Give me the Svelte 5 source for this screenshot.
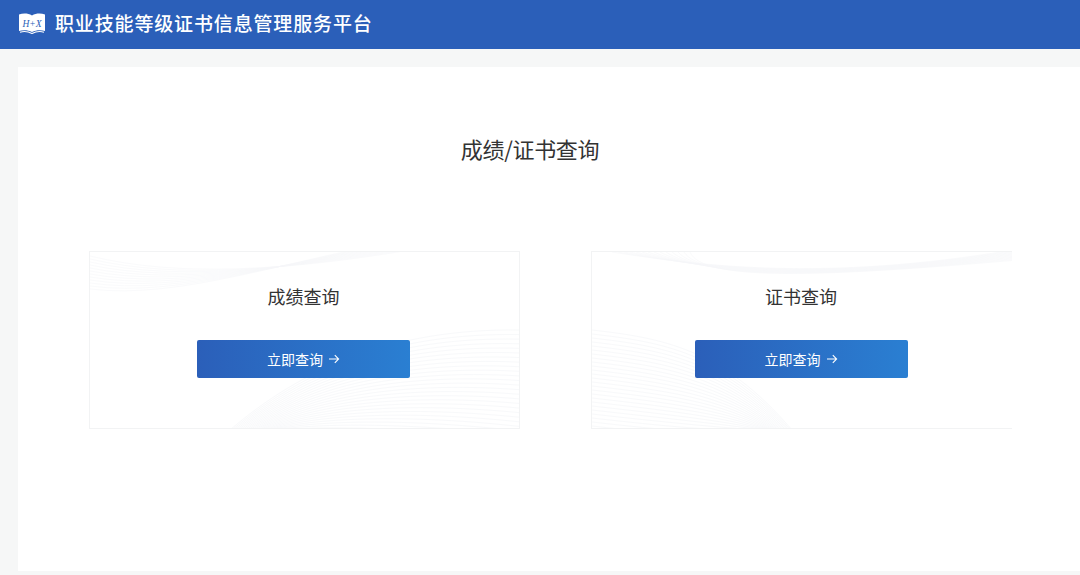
<script lang="ts">
	// faint wave lines behind each card, one family of curves per corner
	function waves(count: number, fn: (i: number) => string) {
		return Array.from({ length: count }, (_, i) => fn(i));
	}

	const firstTop = waves(12, (i) => `M0 ${4 + i * 3} C90 ${26 + i * 2} 200 ${18 - i} 320 ${-2 - i}`);
	const firstBottom = waves(26, (i) => {
		const y = 76 + i * 4;
		return `M${140 + i * 2} 178 C210 ${118 + i * 2.4} 300 ${y} 431 ${y + 2 + i * 0.6}`;
	});
	const secondTop = waves(14, (i) => `M${20 + i * 6} 0 C110 ${14 + i * 1.2} 230 ${30 - i * 0.4} 421 ${-2 + i * 0.8}`);
	const secondBottom = waves(26, (i) => {
		const y = 78 + i * 4;
		return `M0 ${y} C70 ${y + 8} 130 ${y + 18 - i * 0.2} ${200 - i * 1.5} 178`;
	});

	const cards = [
		{ title: '成绩查询', top: firstTop, bottom: firstBottom },
		{ title: '证书查询', top: secondTop, bottom: secondBottom }
	];
</script>

<header class="topbar">
	<svg class="logo" viewBox="0 0 28 22" aria-hidden="true">
		<path d="M1 2.5C5 1 10 1 14 3.5C18 1 23 1 27 2.5V19C23 17.8 18 18 14 20C10 18 5 17.8 1 19Z" fill="#fff" />
		<path d="M2 20.2C6 19 10 19.4 14 21.4C18 19.4 22 19 26 20.2" fill="none" stroke="#fff" stroke-width="1.1" />
		<text x="14" y="14.5" class="logo-text">H+X</text>
	</svg>
	<span class="brand">职业技能等级证书信息管理服务平台</span>
</header>

<main class="page">
	<section class="panel">
		<h1 class="heading">成绩/证书查询</h1>
		<div class="cards">
			{#each cards as card}
				<article class="card">
					<svg class="lines" viewBox="0 0 431 178" aria-hidden="true">
						{#each card.top as d}
							<path {d} />
						{/each}
						{#each card.bottom as d}
							<path {d} class="strong" />
						{/each}
					</svg>
					<h2 class="card-title">{card.title}</h2>
					<button class="query" type="button">
						立即查询
						<svg class="arrow" viewBox="0 0 12 12" aria-hidden="true">
							<path d="M1 6H10.5M6.8 2.2L10.6 6L6.8 9.8" />
						</svg>
					</button>
				</article>
			{/each}
		</div>
	</section>
</main>

<style>
	:global(body) {
		margin: 0;
		background: #f6f7f7;
		font-family: "Noto Sans CJK SC", "Liberation Sans", sans-serif;
		overflow: hidden;
	}

	.topbar {
		display: flex;
		align-items: center;
		gap: 9px;
		height: 49px;
		padding: 0 0 3px 18px;
		box-sizing: border-box;
		background: #2b5fb9;
	}

	.logo {
		width: 28px;
		height: 22px;
		flex: none;
	}

	.logo-text {
		fill: #2b5fb9;
		font-family: "Liberation Serif", serif;
		font-size: 9.5px;
		font-style: italic;
		text-anchor: middle;
	}

	.brand {
		color: #fff;
		font-size: 19px;
		font-weight: 500;
		letter-spacing: 0.85px;
		line-height: 26px;
		white-space: nowrap;
	}

	.page {
		height: 526px;
		padding: 18px 0 4px 18px;
		box-sizing: border-box;
	}

	.panel {
		height: 100%;
		padding-top: 65px;
		box-sizing: border-box;
		background: #fff;
	}

	.heading {
		width: 1024px;
		margin: 0;
		color: #333;
		font-size: 22px;
		font-weight: 400;
		letter-spacing: -0.3px;
		line-height: 32px;
		text-align: center;
	}

	.cards {
		display: grid;
		grid-template-columns: 431px 421px;
		gap: 71px;
		margin: 87px 0 0 71px;
	}

	.card {
		position: relative;
		display: flex;
		flex-direction: column;
		align-items: center;
		height: 178px;
		padding-right: 2px;
		box-sizing: border-box;
		border: 1px solid #f2f3f4;
		overflow: hidden;
	}

	.card + .card {
		border-right: 0;
	}

	.lines {
		position: absolute;
		inset: 0;
		width: 431px;
		height: 178px;
		fill: none;
		stroke: #e9ebf0;
		stroke-width: 0.5;
		opacity: 0.4;
	}

	.lines .strong {
		stroke: #dfe3ea;
	}

	.card-title {
		position: relative;
		margin: 30px 0 0;
		color: #333;
		font-size: 18px;
		font-weight: 400;
		line-height: 28px;
	}

	.query {
		position: relative;
		display: flex;
		align-items: center;
		justify-content: center;
		gap: 5px;
		width: 213px;
		height: 38px;
		margin-top: 30px;
		padding: 0 0 1px;
		border: 0;
		border-radius: 2px;
		background: linear-gradient(90deg, #2b5fb9, #2a7fd2);
		color: #fff;
		font: inherit;
		font-size: 14px;
	}

	.arrow {
		width: 12px;
		height: 12px;
		fill: none;
		stroke: #fff;
		stroke-width: 1.1;
	}
</style>
